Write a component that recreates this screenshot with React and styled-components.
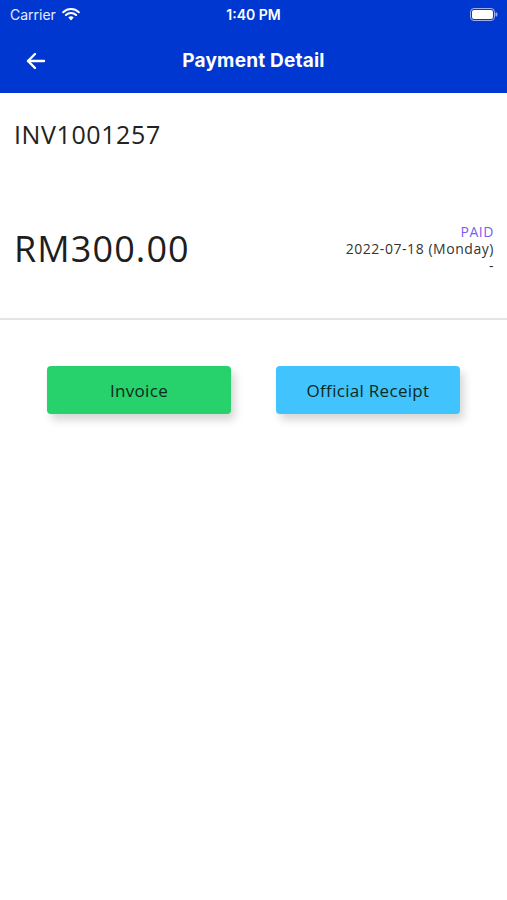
import React from "react";
import styled, { createGlobalStyle } from "styled-components";

const GlobalStyle = createGlobalStyle`
  body {
    margin: 0;
    background: #ffffff;
    font-family: "Open Sans", "Liberation Sans", sans-serif;
  }
`;

const Page = styled.div`
  width: 507px;
  height: 900px;
  background: #ffffff;
  display: flex;
  flex-direction: column;
`;

const Top = styled.div`
  background: #0037d1;
  color: #ffffff;
  height: 93px;
  display: flex;
  flex-direction: column;
`;

const StatusBar = styled.div`
  height: 28px;
  display: flex;
  align-items: center;
  justify-content: space-between;
  padding: 0 9px 0 10px;
  font-family: Inter, "Liberation Sans", sans-serif;
  font-size: 14px;
  position: relative;
`;

const Carrier = styled.div`
  display: flex;
  align-items: center;
  gap: 6px;
  font-size: 14px;
  color: #e8ecff;
`;

const Clock = styled.div`
  position: absolute;
  left: 0;
  right: 0;
  text-align: center;
  font-weight: 600;
  font-size: 14px;
`;

const NavBar = styled.div`
  flex: 1;
  display: flex;
  align-items: center;
  position: relative;
  padding-left: 24px;
`;

const Title = styled.div`
  position: absolute;
  left: 0;
  right: 0;
  text-align: center;
  font-family: Inter, "Liberation Sans", sans-serif;
  font-weight: 700;
  font-size: 19px;
  letter-spacing: 0.2px;
  pointer-events: none;
`;

const Card = styled.div`
  height: 225px;
  border-bottom: 2px solid #e4e4e4;
  padding: 0 13px 0 14px;
  display: flex;
  flex-direction: column;
`;

const InvoiceNo = styled.div`
  margin-top: 24px;
  font-size: 25px;
  color: #222;
  letter-spacing: 0.6px;
`;

const Row = styled.div`
  margin-top: 72px;
  display: flex;
  justify-content: space-between;
  align-items: center;
`;

const Amount = styled.div`
  font-size: 36px;
  color: #1e1e1e;
  letter-spacing: 1.1px;
`;

const Meta = styled.div`
  display: flex;
  flex-direction: column;
  align-items: flex-end;
  font-size: 14px;
  line-height: 17px;
  color: #333;
  letter-spacing: 0.55px;
`;

const Status = styled.div`
  color: #7b5cf0;
`;

const Buttons = styled.div`
  display: flex;
  justify-content: space-between;
  padding: 46px 47px 0 47px;
`;

const Button = styled.button`
  width: 184px;
  height: 48px;
  border: none;
  border-radius: 4px;
  background: ${(p) => p.bg};
  color: #0f2a20;
  font-family: "Open Sans", "Liberation Sans", sans-serif;
  font-size: 17px;
  letter-spacing: 0.3px;
  box-shadow: 4px 6px 8px rgba(0, 0, 0, 0.16);
`;

export default function App() {
  return (
    <Page>
      <GlobalStyle />
      <Top>
        <StatusBar>
          <Carrier>
            Carrier
            <svg width="18" height="13" viewBox="0 0 18 13">
              <path d="M9 12.5 L6.3 9.5 A4 4 0 0 1 11.7 9.5 Z" fill="#fff" />
              <path d="M3.9 7 A7.4 7.4 0 0 1 14.1 7" stroke="#fff" strokeWidth="2" fill="none" strokeLinecap="round" />
              <path d="M1.2 4.2 A11.4 11.4 0 0 1 16.8 4.2" stroke="#fff" strokeWidth="2" fill="none" strokeLinecap="round" />
            </svg>
          </Carrier>
          <Clock>1:40 PM</Clock>
          <svg width="28" height="13" viewBox="0 0 28 13">
            <rect x="0.5" y="0.5" width="24" height="12" rx="3.5" stroke="#9fb0ee" fill="none" />
            <rect x="2" y="2" width="21" height="9" rx="2" fill="#fff" />
            <rect x="25.5" y="4.5" width="1.8" height="4" rx="0.8" fill="#9fb0ee" />
          </svg>
        </StatusBar>
        <NavBar>
          <svg width="24" height="24" viewBox="0 0 24 24" fill="none" stroke="#fff" strokeWidth="2.4" strokeLinecap="round" strokeLinejoin="round">
            <path d="M20 12H4" />
            <path d="M11 5l-7 7 7 7" />
          </svg>
          <Title>Payment Detail</Title>
        </NavBar>
      </Top>
      <Card>
        <InvoiceNo>INV1001257</InvoiceNo>
        <Row>
          <Amount>RM300.00</Amount>
          <Meta>
            <Status>PAID</Status>
            <div>2022-07-18 (Monday)</div>
            <div>-</div>
          </Meta>
        </Row>
      </Card>
      <Buttons>
        <Button bg="#27d16b">Invoice</Button>
        <Button bg="#41c3fd">Official Receipt</Button>
      </Buttons>
    </Page>
  );
}
